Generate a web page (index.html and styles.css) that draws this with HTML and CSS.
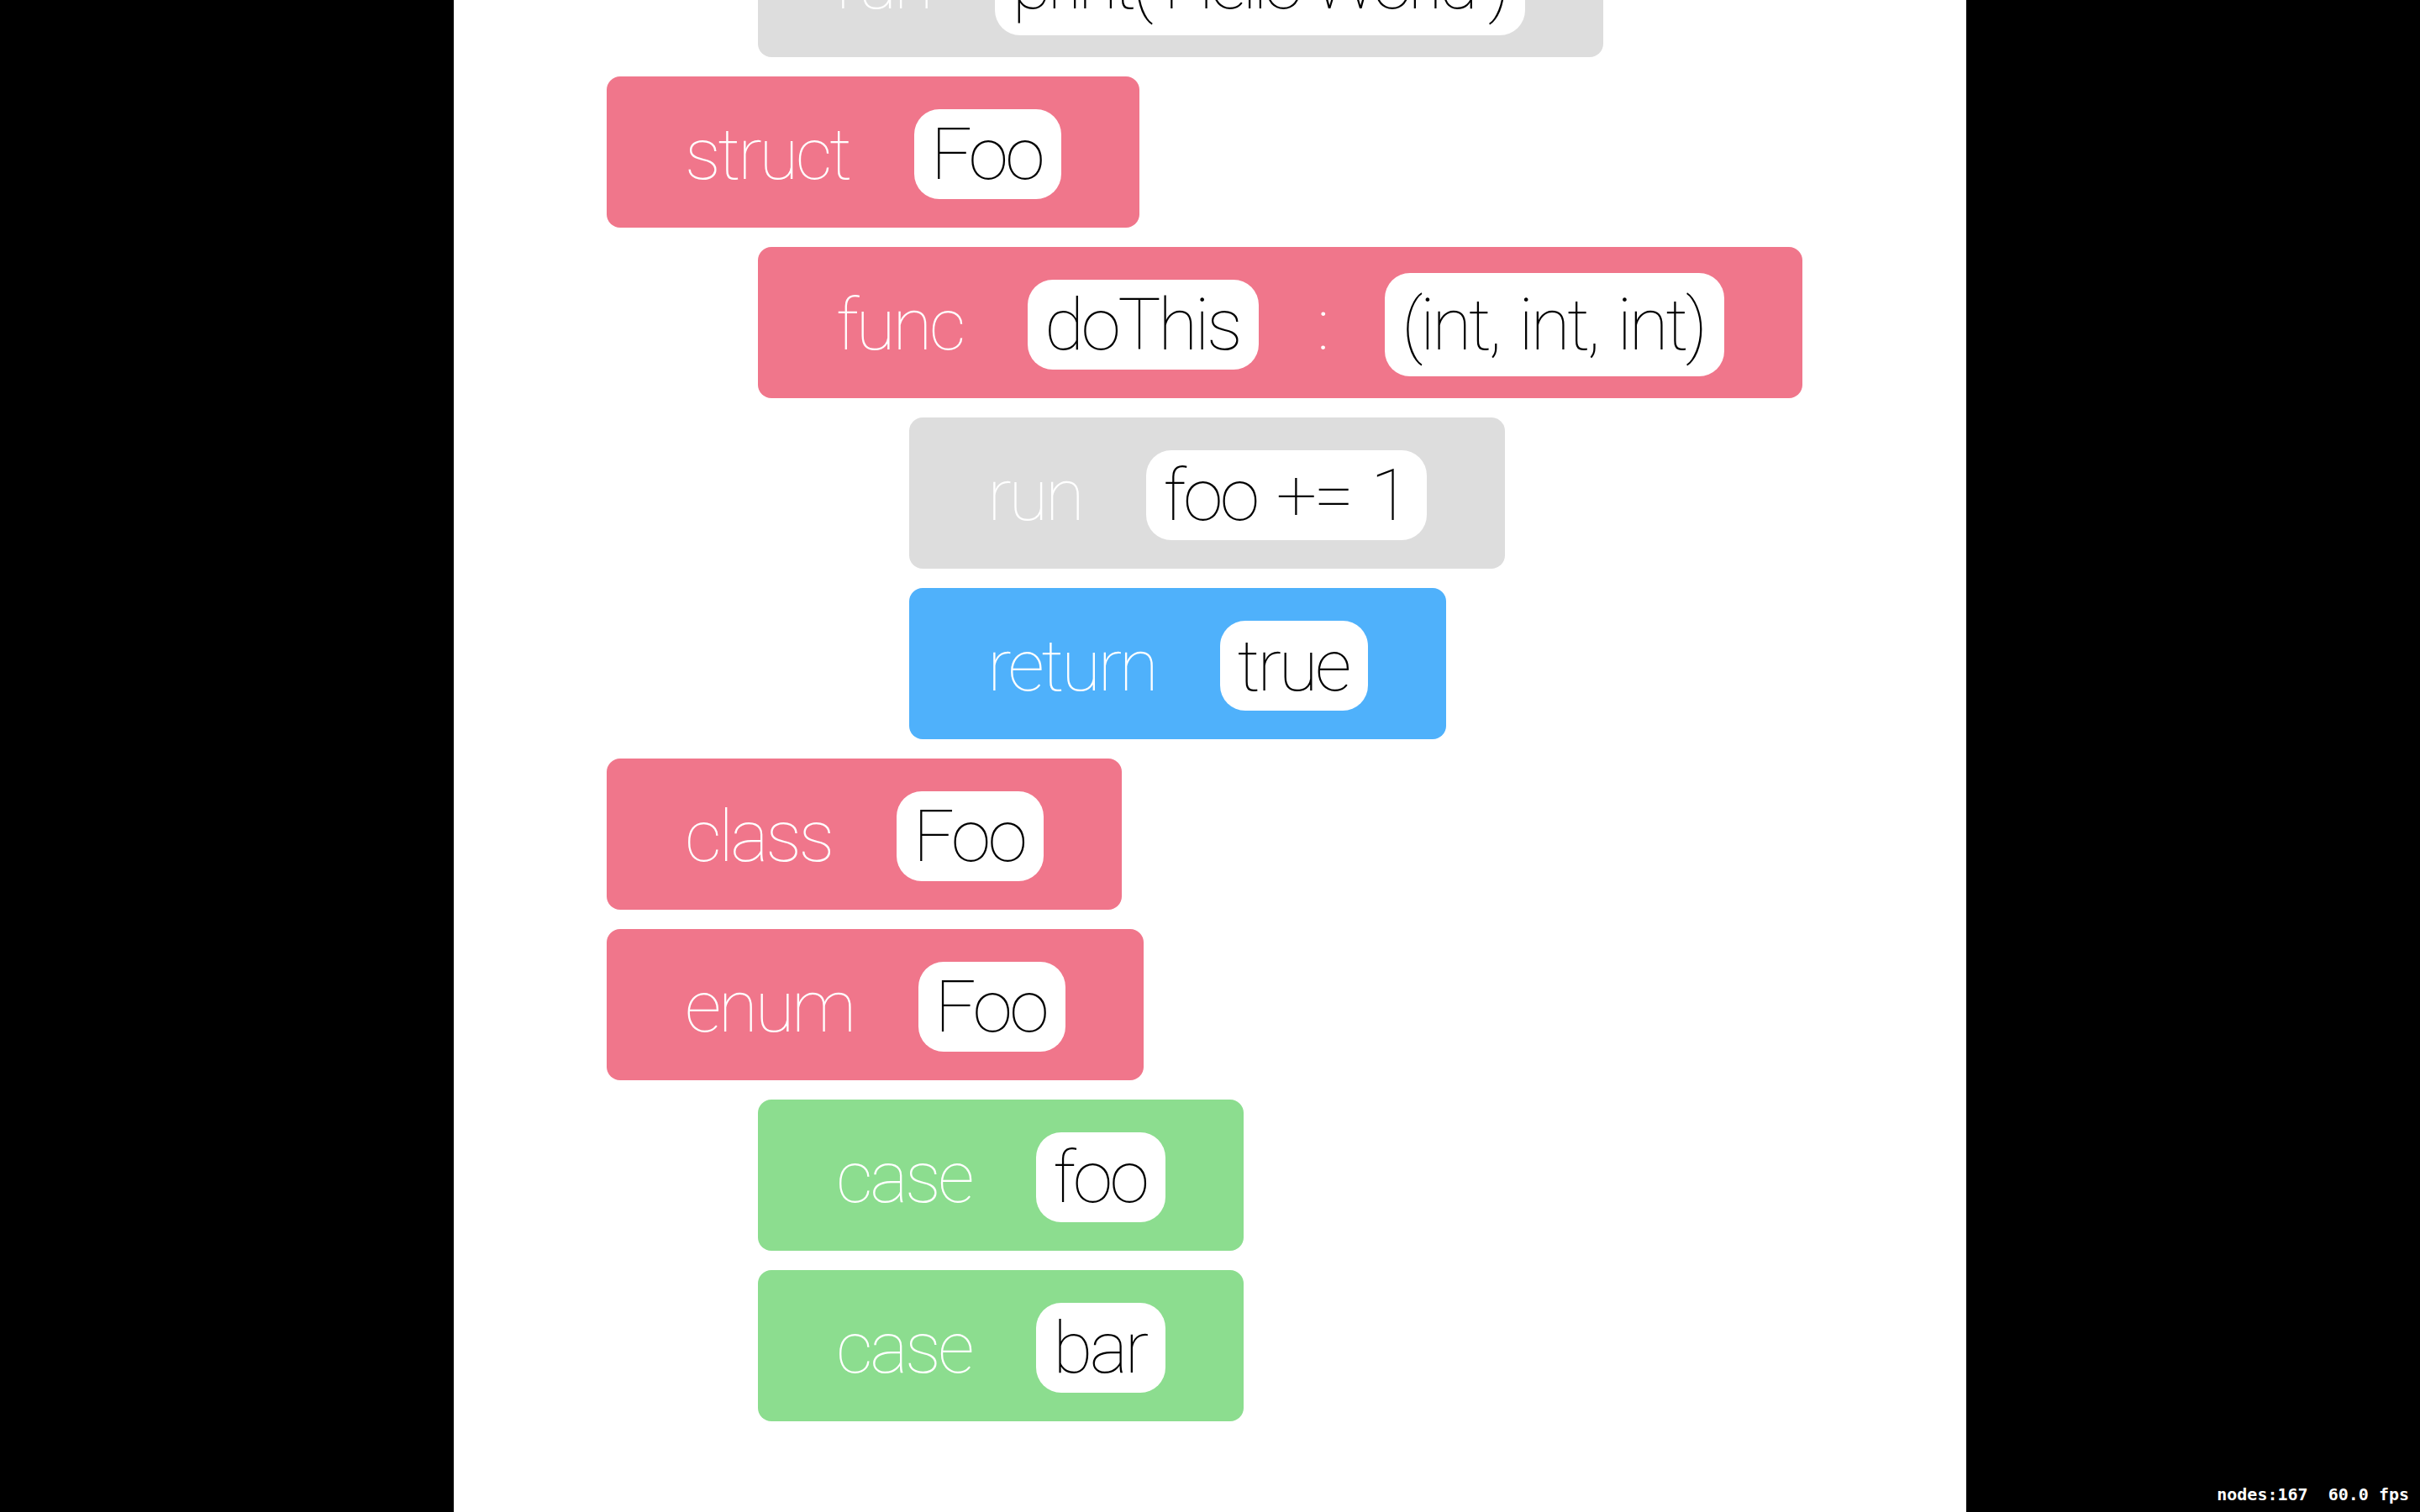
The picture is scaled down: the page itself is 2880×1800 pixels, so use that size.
FILE: index.html
```html
<!DOCTYPE html>
<html lang="en">
<head>
    <meta charset="UTF-8">
    <title>Blocks</title>
    <link rel="stylesheet" href="styles.css">
</head>
<body>
    <div class="screen">
        <div class="canvas">
            <div class="block gray indent-1 scrolled">
                <span class="kw">run</span>
                <span class="pill tall tight">print("Hello World")</span>
            </div>

            <div class="block pink">
                <span class="kw">struct</span>
                <span class="pill">Foo</span>
            </div>

            <div class="block pink indent-1">
                <span class="kw">func</span>
                <span class="pill">doThis</span>
                <span class="kw sep">:</span>
                <span class="pill tall">(int, int, int)</span>
            </div>

            <div class="block gray indent-2">
                <span class="kw">run</span>
                <span class="pill">foo += 1</span>
            </div>

            <div class="block blue indent-2">
                <span class="kw">return</span>
                <span class="pill">true</span>
            </div>

            <div class="block pink">
                <span class="kw">class</span>
                <span class="pill">Foo</span>
            </div>

            <div class="block pink">
                <span class="kw">enum</span>
                <span class="pill">Foo</span>
            </div>

            <div class="block green indent-1">
                <span class="kw">case</span>
                <span class="pill">foo</span>
            </div>

            <div class="block green indent-1">
                <span class="kw">case</span>
                <span class="pill">bar</span>
            </div>
        </div>

        <div class="stats">nodes:167&nbsp;&nbsp;60.0 fps</div>
    </div>
</body>
</html>
```

FILE: styles.css
```css
:root {
    --pink: #f0768b;
    --gray: #dddddd;
    --blue: #4fb1fb;
    --green: #8cdd8f;
}

* {
    margin: 0;
    padding: 0;
    box-sizing: border-box;
}

body {
    background: #000;
    font-family: "Roboto", "Liberation Sans", sans-serif;
    overflow: hidden;
}

.screen {
    position: relative;
    height: 100vh;
}

.canvas {
    width: 1800px;
    height: 100vh;
    margin: 0 auto;
    padding-left: 182px;
    background: #fff;
    display: flex;
    flex-direction: column;
    align-items: flex-start;
    gap: 23px;
    overflow: hidden;
}

.block {
    display: flex;
    align-items: center;
    gap: 77px;
    height: 180px;
    padding: 4px 93px 0;
    border-radius: 16px;
    flex-shrink: 0;
    font-size: 86px;
    font-weight: 100;
    letter-spacing: -3.5px;
    word-spacing: 6px;
    line-height: 107px;
}

/* the list is scrolled: first block sits half above the top */
.block.scrolled {
    margin-top: -112px;
}

.indent-1 {
    margin-left: 180px;
}

.indent-2 {
    margin-left: 360px;
}

.pink { background: var(--pink); }
.gray { background: var(--gray); }
.blue { background: var(--blue); }
.green { background: var(--green); }

.kw {
    color: #fff;
    white-space: pre;
}

.kw.sep {
    margin: 0 -8px;
}

.pill {
    background: #fff;
    color: #000;
    padding: 0 23px 0 20px;
    border-radius: 30px;
    white-space: pre;
}

.pill.tall {
    padding: 8px 23px 8px 20px;
}

.pill.tight {
    letter-spacing: -5px;
    word-spacing: 0;
}

.stats {
    position: absolute;
    right: 13px;
    bottom: 9px;
    color: #fff;
    font-family: "DejaVu Sans Mono", "Liberation Mono", monospace;
    font-size: 20px;
    font-weight: bold;
}
```
